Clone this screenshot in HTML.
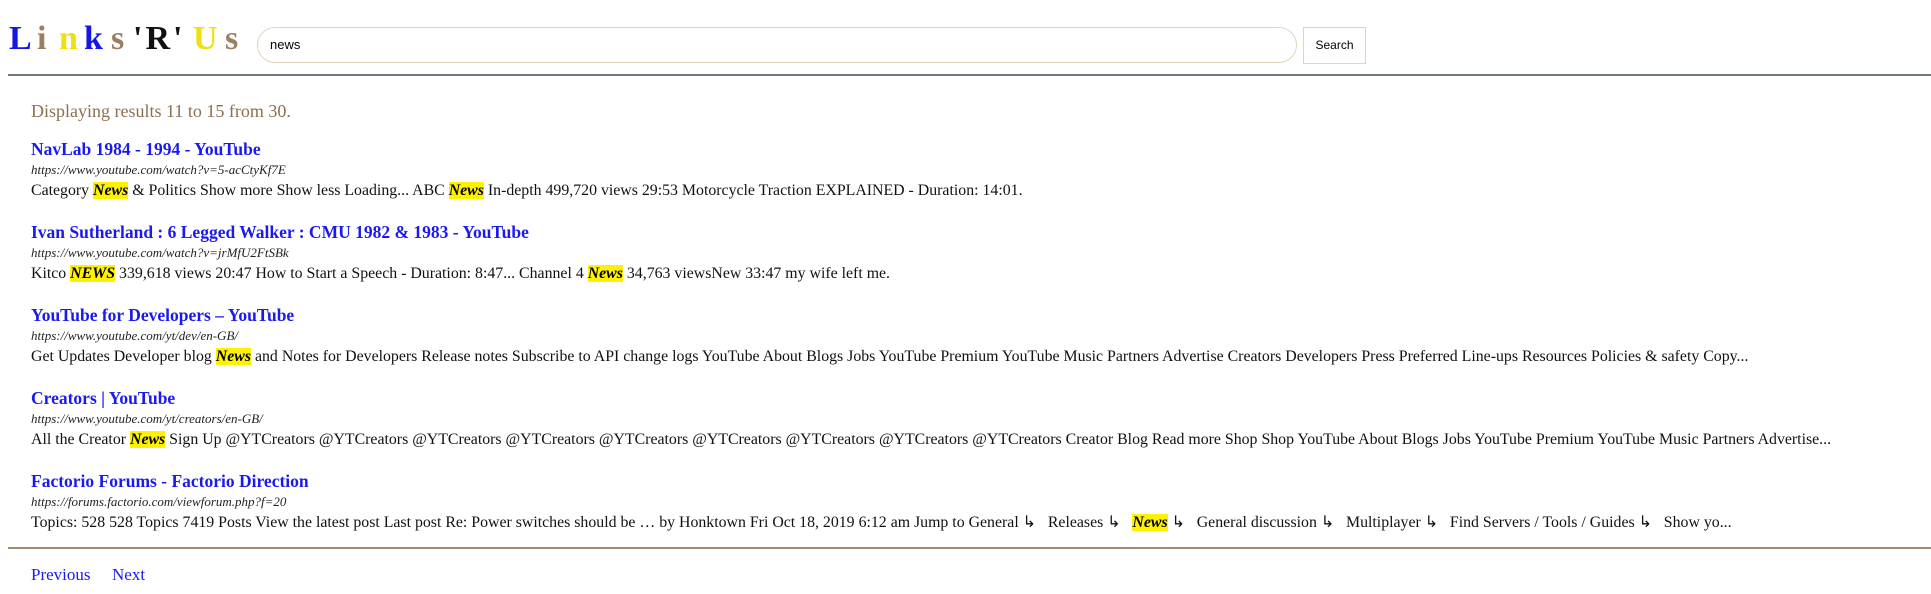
<!DOCTYPE html>
<html><head><meta charset="utf-8"><style>
body{margin:0;width:1931px;height:594px;background:#fff;font-family:"Liberation Serif",serif;position:relative;overflow:hidden}
.logo span{position:absolute;top:19px;font-size:34px;font-weight:bold;line-height:40px}
.inp{position:absolute;left:257px;top:27px;width:1040px;height:36px;border:1px solid #e2d3bf;border-radius:20px;box-sizing:border-box;font:13px "Liberation Sans",sans-serif;line-height:34px;padding-left:12px}
.btn{position:absolute;left:1303px;top:27px;width:63px;height:37px;border:1px solid #e2d3bf;box-sizing:border-box;font:12px "Liberation Sans",sans-serif;text-align:center;line-height:35px}
.hr1{position:absolute;left:8px;right:0;top:74px;height:2px;background:#6f7a80}
.disp{position:absolute;left:31px;top:101px;font-size:18px;color:#8b6f4e}
.r{position:absolute;left:31px}
.t{font-size:17.5px;font-weight:bold;color:#1a1af0;line-height:22px;margin:0}
.u{font-size:13px;font-style:italic;color:#222;line-height:20px}
.s{font-size:15.85px;color:#111;line-height:22px;white-space:nowrap}
.h{background:#fff200;font-weight:bold;font-style:italic;color:#000}
.hr2{position:absolute;left:8px;right:0;top:547px;height:2px;background:#a08c74}
.nav{position:absolute;top:565px;font-size:17px;color:#1a1af0}
</style></head><body>
<div class="logo">
<span style="left:9px;color:#1515e8">L</span>
<span style="left:37px;color:#9b7f5e">i</span>
<span style="left:59px;color:#f0e010">n</span>
<span style="left:84px;color:#1515e8">k</span>
<span style="left:111px;color:#9b7f5e">s</span>
<span style="left:133px;color:#111;letter-spacing:3px">'R'</span>
<span style="left:193px;color:#f0e010">U</span>
<span style="left:225px;color:#9b7f5e">s</span>
</div>
<div class="inp">news</div>
<div class="btn">Search</div>
<div class="hr1"></div>
<div class="disp">Displaying results 11 to 15 from 30.</div>

<div class="r" style="top:138px"><div class="t">NavLab 1984 - 1994 - YouTube</div><div class="u">https://www.youtube.com/watch?v=5-acCtyKf7E</div><div class="s">Category <span class="h">News</span> &amp; Politics Show more Show less Loading... ABC <span class="h">News</span> In-depth 499,720 views 29:53 Motorcycle Traction EXPLAINED - Duration: 14:01.</div></div>

<div class="r" style="top:221px"><div class="t">Ivan Sutherland : 6 Legged Walker : CMU 1982 &amp; 1983 - YouTube</div><div class="u">https://www.youtube.com/watch?v=jrMfU2FtSBk</div><div class="s">Kitco <span class="h">NEWS</span> 339,618 views 20:47 How to Start a Speech - Duration: 8:47... Channel 4 <span class="h">News</span> 34,763 viewsNew 33:47 my wife left me.</div></div>

<div class="r" style="top:304px"><div class="t">YouTube for Developers – YouTube</div><div class="u">https://www.youtube.com/yt/dev/en-GB/</div><div class="s">Get Updates Developer blog <span class="h">News</span> and Notes for Developers Release notes Subscribe to API change logs YouTube About Blogs Jobs YouTube Premium YouTube Music Partners Advertise Creators Developers Press Preferred Line-ups Resources Policies &amp; safety Copy...</div></div>

<div class="r" style="top:387px"><div class="t">Creators | YouTube</div><div class="u">https://www.youtube.com/yt/creators/en-GB/</div><div class="s">All the Creator <span class="h">News</span> Sign Up @YTCreators @YTCreators @YTCreators @YTCreators @YTCreators @YTCreators @YTCreators @YTCreators @YTCreators Creator Blog Read more Shop Shop YouTube About Blogs Jobs YouTube Premium YouTube Music Partners Advertise...</div></div>

<div class="r" style="top:470px"><div class="t">Factorio Forums - Factorio Direction</div><div class="u">https://forums.factorio.com/viewforum.php?f=20</div><div class="s">Topics: 528 528 Topics 7419 Posts View the latest post Last post Re: Power switches should be … by Honktown Fri Oct 18, 2019 6:12 am Jump to General ↳&nbsp;&nbsp; Releases ↳&nbsp;&nbsp; <span class="h">News</span> ↳&nbsp;&nbsp; General discussion ↳&nbsp;&nbsp; Multiplayer ↳&nbsp;&nbsp; Find Servers / Tools / Guides ↳&nbsp;&nbsp; Show yo...</div></div>

<div class="hr2"></div>
<div class="nav" style="left:31px">Previous</div>
<div class="nav" style="left:112px">Next</div>
</body></html>
